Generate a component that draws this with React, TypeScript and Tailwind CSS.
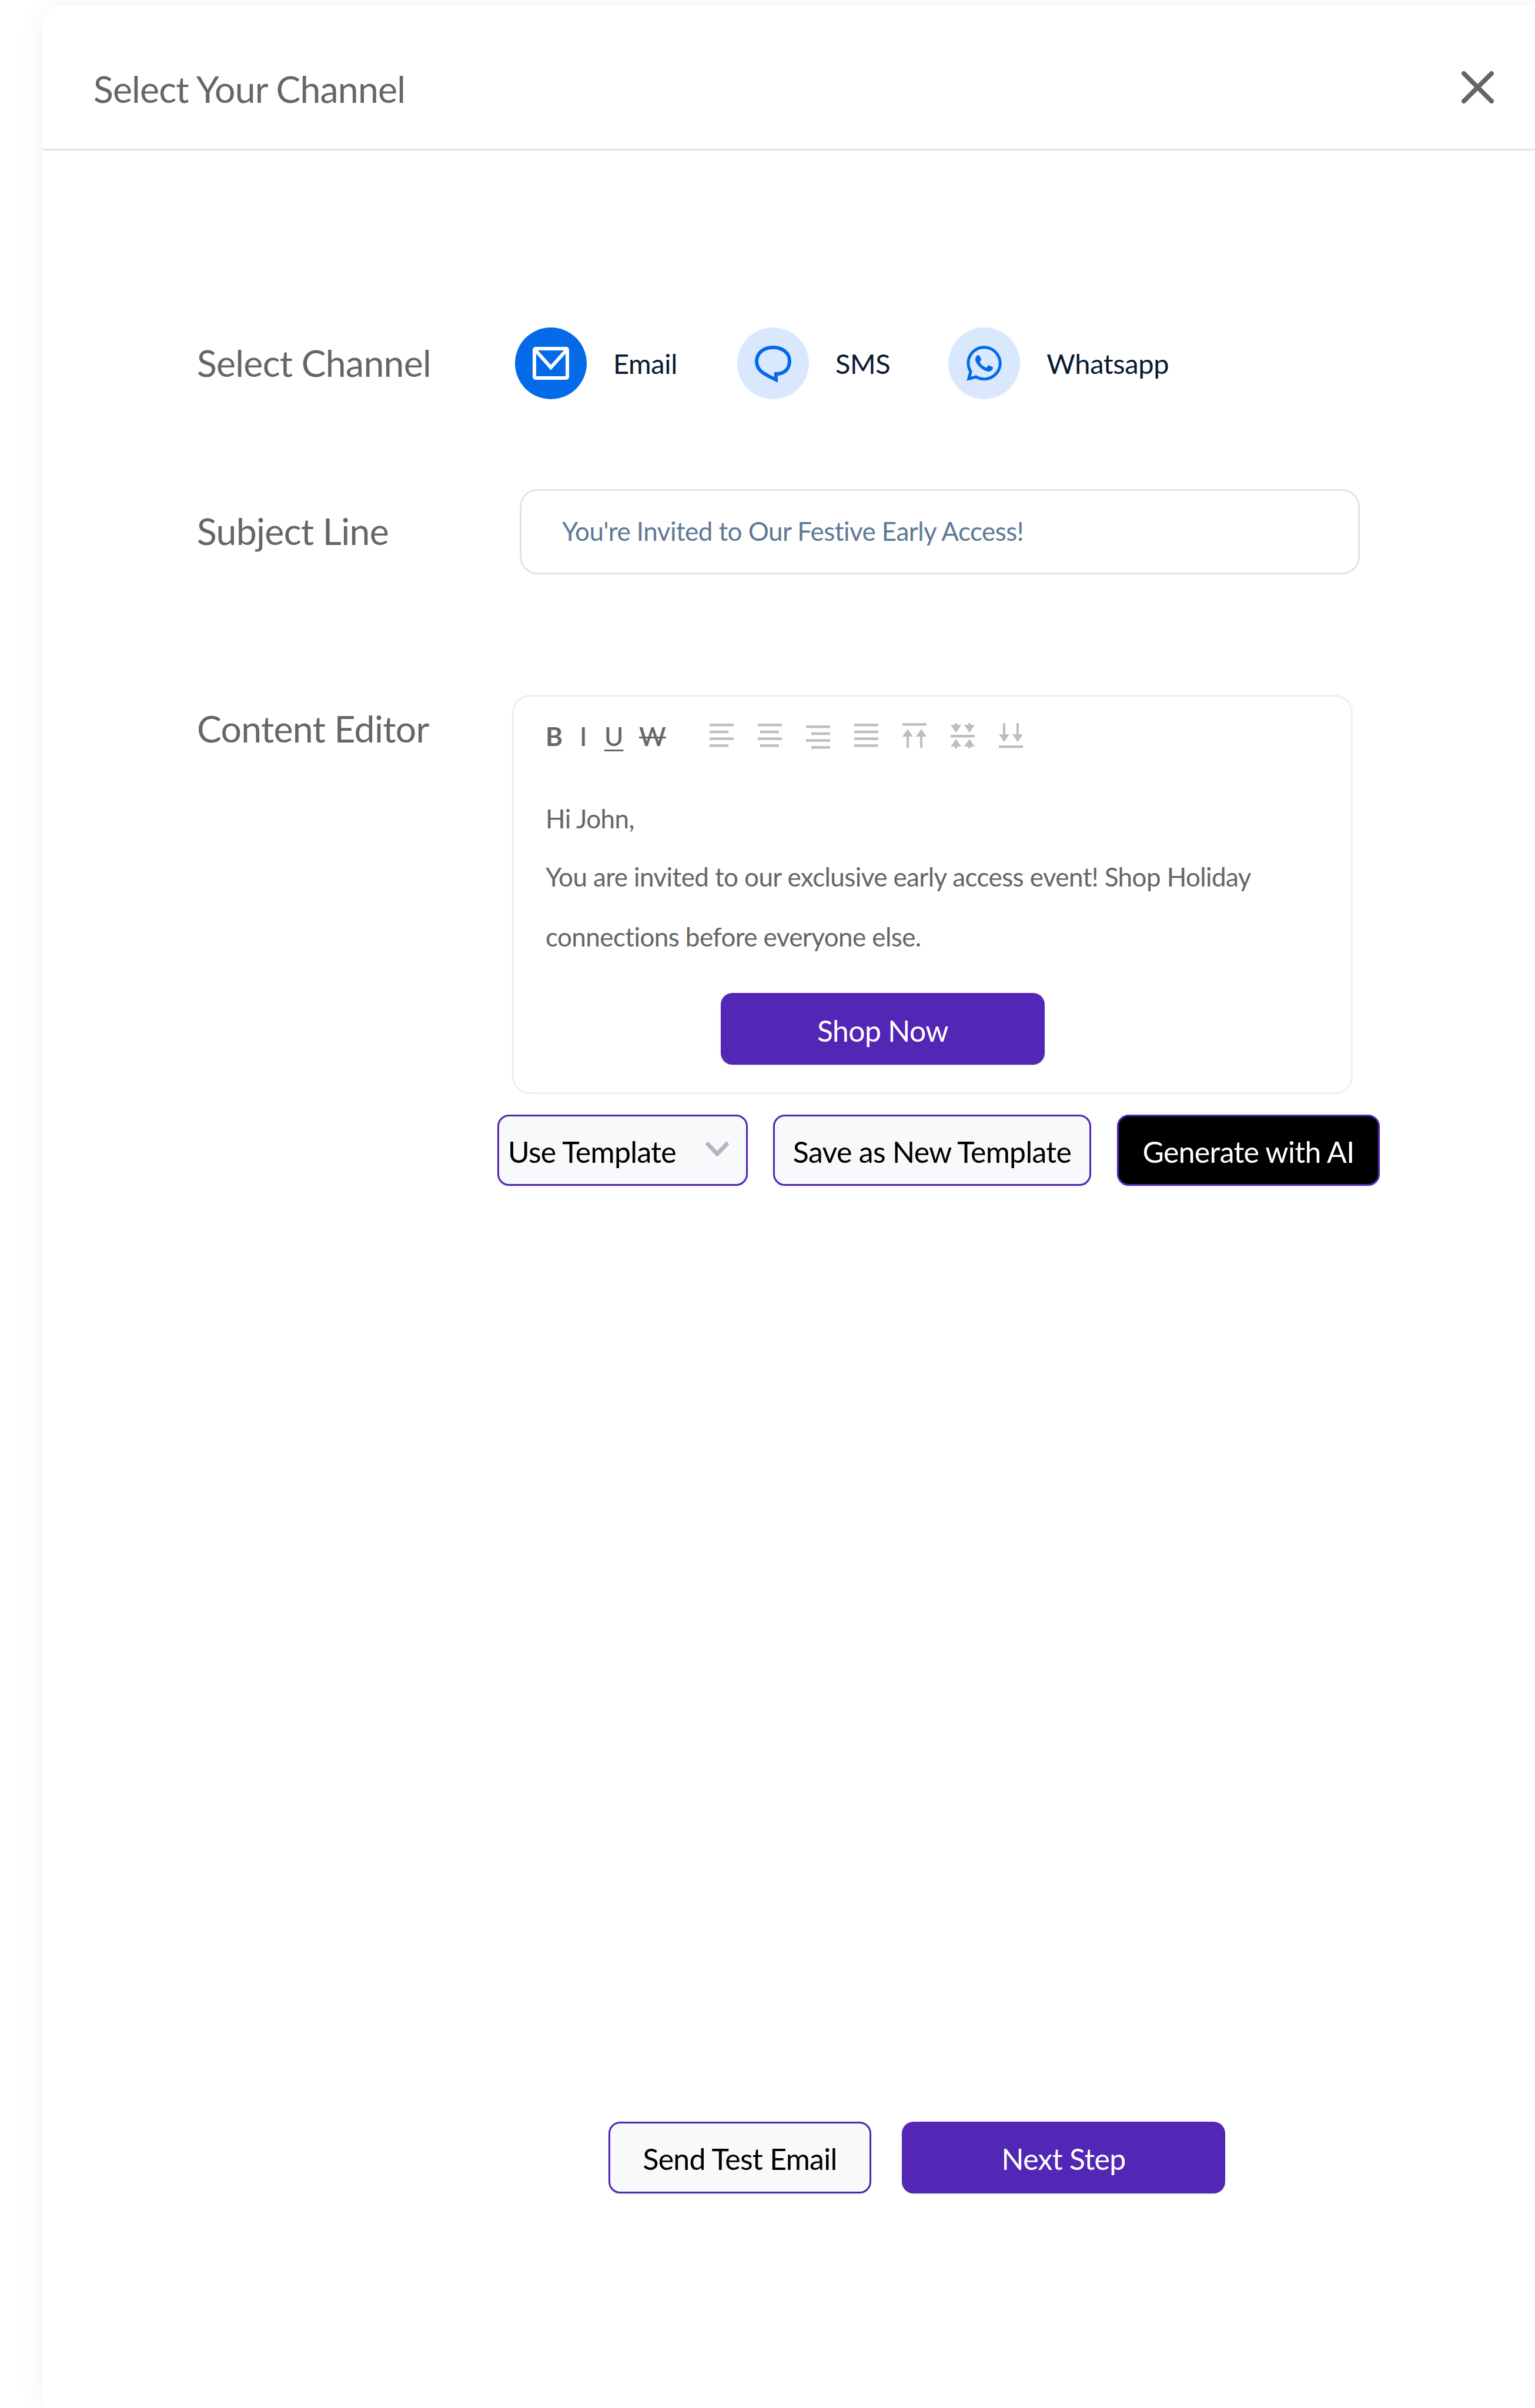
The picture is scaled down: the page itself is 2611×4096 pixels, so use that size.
import { FaWhatsapp } from "react-icons/fa";

const Bars = ({ offsets, dy = 0 }: { offsets: [number, number][]; dy?: number }) => (
  <svg width="41" height="44" viewBox="0 0 41 44" className="block" style={{ marginTop: dy }}>
    {offsets.map(([x, w], i) => (
      <rect key={i} x={x} y={1 + i * 11.7} width={w} height="4.4" fill="#bdbdc4" />
    ))}
  </svg>
);

const Arrow = ({ x, y, down, h = 34 }: { x: number; y: number; down: boolean; h?: number }) => (
  <g fill="#bdbdc4">
    <rect x={x - 2} y={y} width="4" height={h} />
    {down ? (
      <polygon points={`${x - 9},${y + h - 11} ${x + 9},${y + h - 11} ${x},${y + h + 2}`} />
    ) : (
      <polygon points={`${x - 9},${y + 11} ${x + 9},${y + 11} ${x},${y - 2}`} />
    )}
  </g>
);

const VTop = () => (
  <svg width="41" height="44" viewBox="0 0 41 44" className="block">
    <rect x="0" y="0" width="41" height="4.4" fill="#bdbdc4" />
    <Arrow x={9} y={12} down={false} h={30} />
    <Arrow x={32} y={12} down={false} h={30} />
  </svg>
);
const VMid = () => (
  <svg width="41" height="44" viewBox="0 0 41 44" className="block">
    <rect x="0" y="20" width="41" height="4.4" fill="#bdbdc4" />
    <Arrow x={9} y={0} down h={14} />
    <Arrow x={32} y={0} down h={14} />
    <Arrow x={9} y={29} down={false} h={14} />
    <Arrow x={32} y={29} down={false} h={14} />
  </svg>
);
const VBottom = () => (
  <svg width="41" height="44" viewBox="0 0 41 44" className="block">
    <rect x="0" y="38" width="41" height="4.4" fill="#bdbdc4" />
    <Arrow x={9} y={0} down h={30} />
    <Arrow x={32} y={0} down h={30} />
  </svg>
);

const Channel = ({ active, label, children }: { active?: boolean; label: string; children: React.ReactNode }) => (
  <div className="flex items-center gap-[45px]">
    <div className={`flex h-[122px] w-[122px] items-center justify-center rounded-full ${active ? "bg-[#046ae8]" : "bg-[#d9e8fd]"}`}>
      {children}
    </div>
    <span className="text-[47px] leading-[60px] tracking-[-0.4px] text-[#0b1a33]">{label}</span>
  </div>
);

export default function App() {
  return (
    <div className="h-[4096px] overflow-hidden bg-white font-['Lato','Open_Sans',sans-serif]">
      <div className="ml-[73px] mt-[9px] h-[4087px] rounded-tl-[32px] bg-white shadow-[0_0_50px_rgba(0,0,0,0.06)]">
        <header className="flex h-[247px] items-center justify-between border-b-[3px] border-[#e3e3e3] pl-[86px] pr-[70px] pt-[40px]">
          <h1 className="text-[62.5px] leading-[80px] tracking-[-0.8px] text-[#666666]">Select Your Channel</h1>
          <svg width="55" height="55" viewBox="0 0 55 55" className="mb-[6px]">
            <path d="M4 4 L51 51 M51 4 L4 51" stroke="#666666" strokeWidth="8" strokeLinecap="round" />
          </svg>
        </header>

        <section className="pl-[262px]">
          <div className="mt-[301px] flex items-center">
            <div className="w-[541px] pb-[2px] text-[62.5px] leading-[80px] tracking-[-0.7px] text-[#666666]">Select Channel</div>
            <div className="flex items-center">
              <Channel active label="Email">
                <svg width="62" height="56" viewBox="0 0 62 56" fill="none">
                  <rect x="3" y="3" width="56" height="50" rx="2" stroke="#ffffff" strokeWidth="6" />
                  <path d="M4 5 L31 35 L58 5" stroke="#ffffff" strokeWidth="6" />
                </svg>
              </Channel>
              <div className="w-[102px]" />
              <Channel label="SMS">
                <svg width="62" height="62" viewBox="0 0 62 62" fill="none" className="mt-[1px]">
                  <path d="M36 58 C20 50 3 44 3 27 C3 12 15 3 31 3 C47 3 59 12 59 26 C59 40 50 48 36 48 Z" stroke="#046ae8" strokeWidth="6" />
                </svg>
              </Channel>
              <div className="w-[99px]" />
              <Channel label="Whatsapp">
                <FaWhatsapp className="h-[68px] w-[68px] text-[#046ae8]" />
              </Channel>
            </div>
          </div>

          <div className="mt-[153px] flex items-center">
            <div className="w-[549px] pb-[4px] text-[62.5px] leading-[80px] tracking-[-0.7px] text-[#666666]">Subject Line</div>
            <div className="flex h-[145px] w-[1429px] items-center rounded-[30px] border-[3px] border-[#e3e3e3] pb-[3px] pl-[69px] text-[44px] tracking-[-0.56px] text-[#5f7896]">
              You're Invited to Our Festive Early Access!
            </div>
          </div>

          <div className="mt-[205px] flex items-start">
            <div className="w-[536px] pt-[17px] text-[62.5px] leading-[80px] tracking-[-0.7px] text-[#666666]">Content Editor</div>
            <div className="h-[679px] w-[1430px] rounded-[30px] border-[3px] border-[#eeeeee] pl-[54px] pt-[45px]">
              <div className="flex items-start">
                <div className="flex h-[44px] w-[279px] items-center text-[44px] leading-none text-[#666666]">
                  <span className="w-[58px] font-bold">B</span>
                  <span className="w-[42px] font-medium">I</span>
                  <span className="w-[59px] font-medium underline decoration-[3px] underline-offset-[6px]">U</span>
                  <span className="font-medium line-through decoration-[3px]">W</span>
                </div>
                <div className="flex gap-[41px]">
                  <Bars offsets={[[0, 41], [0, 32], [0, 41], [0, 32]]} />
                  <Bars offsets={[[0, 41], [4, 32], [0, 41], [4, 32]]} />
                  <Bars dy={3} offsets={[[0, 41], [9, 32], [0, 41], [9, 32]]} />
                  <Bars offsets={[[0, 41], [0, 41], [0, 41], [0, 41]]} />
                  <VTop />
                  <VMid />
                  <VBottom />
                </div>
              </div>
              <p className="mt-[85px] text-[44px] leading-[60px] tracking-[-0.6px] text-[#666666]">Hi John,</p>
              <p className="mt-[39px] text-[44px] leading-[60px] tracking-[-0.6px] text-[#666666]">You are invited to our exclusive early access event! Shop Holiday</p>
              <p className="mt-[42px] text-[44px] leading-[60px] tracking-[-0.6px] text-[#666666]">connections before everyone else.</p>
              <button className="ml-[298px] mt-[66px] flex h-[122px] w-[551px] items-center justify-center rounded-[20px] bg-[#5327b5] pt-[6px] text-[50px] tracking-[-0.7px] text-white shadow-sm">Shop Now</button>
            </div>
          </div>

          <div className="ml-[511px] mt-[35px] flex gap-[43px]">
            <button className="flex h-[121px] w-[426px] items-center justify-between rounded-[20px] border-[3px] border-[#5327b5] bg-[#f8f9fb] pl-[15px] pr-[29px] text-[50px] tracking-[-0.7px] text-black shadow-sm">
              <span className="pt-[5px]">Use Template</span>
              <svg width="40" height="26" viewBox="0 0 40 26" fill="none" className="mb-[5px]">
                <path d="M2 3 L20 22 L38 3" stroke="#b5b7c0" strokeWidth="7" />
              </svg>
            </button>
            <button className="flex h-[121px] w-[541px] items-center justify-center rounded-[20px] border-[3px] border-[#5327b5] bg-[#f8f9fb] pt-[5px] text-[50px] tracking-[-0.7px] text-black shadow-sm">Save as New Template</button>
            <button className="ml-[1px] flex h-[121px] w-[447px] items-center justify-center rounded-[20px] border-[3px] border-[#5327b5] bg-black pt-[5px] text-[50px] tracking-[-0.7px] text-white shadow-sm">Generate with AI</button>
          </div>

          <div className="ml-[700px] mt-[1592px] flex gap-[52px]">
            <button className="flex h-[122px] w-[447px] items-center justify-center rounded-[20px] border-[3px] border-[#5327b5] bg-[#f8f9fb] pt-[4px] text-[50px] tracking-[-0.7px] text-black shadow-sm">Send Test Email</button>
            <button className="flex h-[122px] w-[550px] items-center justify-center rounded-[20px] bg-[#5327b5] pt-[4px] text-[50px] tracking-[-0.7px] text-white shadow-sm">Next Step</button>
          </div>
        </section>
      </div>
    </div>
  );
}
